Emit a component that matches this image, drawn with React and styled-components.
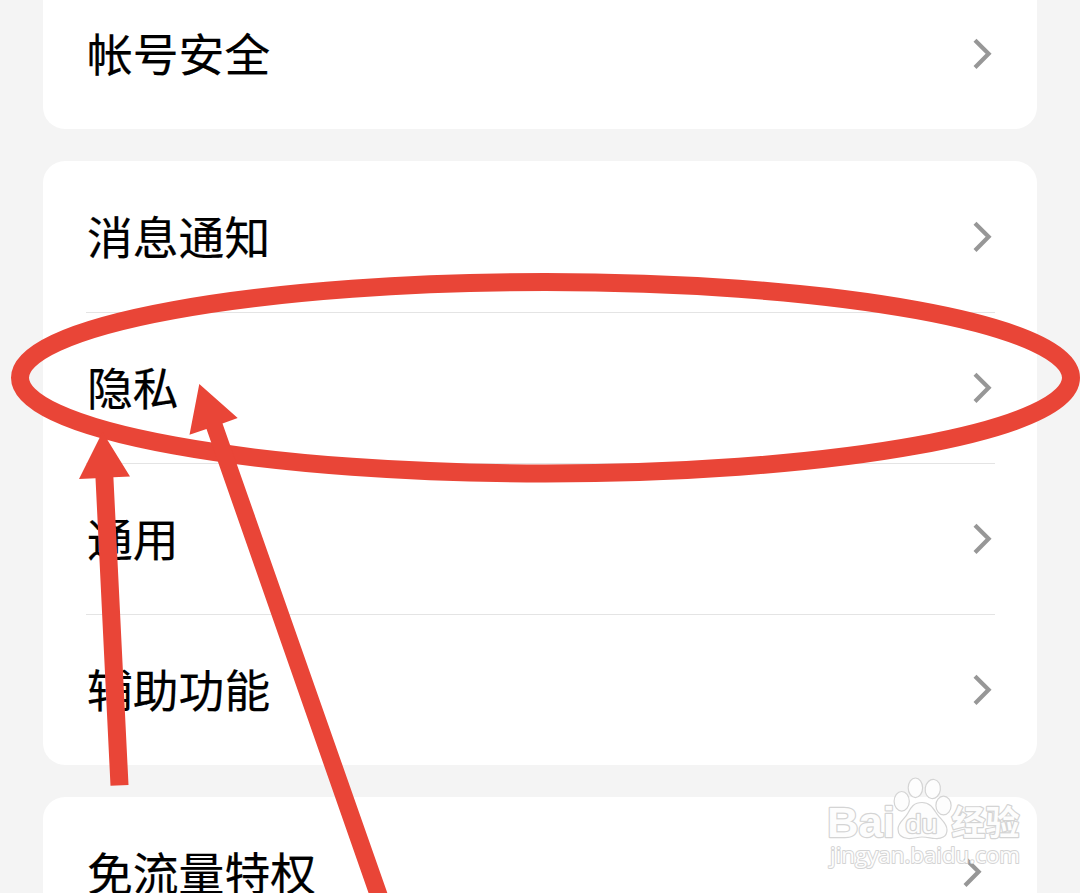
import React from 'react';
import styled, { createGlobalStyle } from 'styled-components'

const GlobalStyle = createGlobalStyle`
  body {
    margin: 0;
    background: #f4f4f4;
    overflow: hidden;
  }
`;

const Page = styled.main`
  box-sizing: border-box;
  position: relative;
  display: flex;
  flex-direction: column;
  gap: 32px;
  width: 1080px;
  height: 893px;
  padding: 0 43px;
  overflow: hidden;
  background: #f4f4f4;
  font-family: "Noto Sans CJK SC", sans-serif;
  color: #000;
`;

const Card = styled.ul`
  flex: none;
  margin: 0;
  padding: 0 42px 0 43px;
  list-style: none;
  background: #fff;
  border-radius: ${props => props.$top ? '0 0 22px 22px' : '22px'};
  margin-top: ${props => props.$top ? '-22px' : '0'};
`;

const Row = styled.li`
  box-sizing: border-box;
  display: flex;
  align-items: center;
  justify-content: space-between;
  height: 151px;
  padding: 0 3px 0 1px;
  & + & {
    border-top: 1px solid #e4e4e4;
    padding-bottom: 1px;
  }
`;

const Label = styled.span`
  font-size: 45.8px;
  line-height: 66px;
  padding-bottom: 3px;
  -webkit-text-stroke: 0.2px #000;
`;

const Arrow = styled.svg`
  width: 20px;
  height: 34px;
  margin-right: ${props => props.$shift || 0}px;
  margin-bottom: ${props => props.$shift ? 2 : 0}px;
`;

const Overlay = styled.svg`
  position: absolute;
  top: 0;
  left: 0;
  width: 1080px;
  height: 893px;
  pointer-events: none;
`;

const Outlined = styled.text`
  paint-order: stroke;
  stroke-width: ${props => props.$outline || 2.4}px;
  stroke-linejoin: round;
  font-family: ${props => props.$font}, sans-serif;
  font-weight: ${props => props.$weight || 700};
`;

const groups = [
  { top: true, items: ['帐号安全'] },
  { items: ['消息通知', '隐私', '通用', '辅助功能'] },
  { shift: 10, items: ['免流量特权'] },
];

function Chevron({ shift }) {
  return (
    <Arrow $shift={shift} viewBox="0 0 20 34">
      <path d="M3 3.2 L16.6 16.8 L3 30.4" fill="none" stroke="#979797" strokeWidth="4.2" />
    </Arrow>
  )
}

function Watermark() {
  return (
    <g fill="#fdfdfd" stroke="#d4d4d4" strokeWidth="1.2">
      <Outlined x="827" y="837" fontSize="43" textLength="68" lengthAdjust="spacingAndGlyphs" $font="Liberation Sans">Bai</Outlined>
      <ellipse cx="901.7" cy="801.3" rx="7.6" ry="9.8" />
      <ellipse cx="915.4" cy="787.8" rx="7.2" ry="9.8" />
      <ellipse cx="932.8" cy="789" rx="7.6" ry="9.6" transform="rotate(8 932.8 789)" />
      <ellipse cx="943.5" cy="805.5" rx="7.6" ry="9.4" />
      <path d="M922 802.5 C930 802.5 933 808 937 814 C941 820 947 823 947 830 C947 837 941 839 935 838.5 C930 838 927 837 922 837 C917 837 914 839 908 838.5 C902 838 898 835 898 829 C898 822 905 819 908 813 C911 807 914 802.5 922 802.5 Z" />
      <Outlined x="905.5" y="832.5" fontSize="26" textLength="32" lengthAdjust="spacingAndGlyphs" $weight="400" $font="Liberation Sans">du</Outlined>
      <Outlined x="951.5" y="835" fontSize="34" $font="Noto Sans CJK SC">经验</Outlined>
      <Outlined x="830" y="863" fontSize="22.5" textLength="190" lengthAdjust="spacingAndGlyphs" $outline={2} $weight="400" $font="Open Sans">jingyan.baidu.com</Outlined>
    </g>
  )
}

function Marks() {
  return (
    <g fill="#e94537">
      <ellipse cx="545.5" cy="377.8" rx="525.5" ry="95.7" fill="none" stroke="#e94537" strokeWidth="18" />
      <path d="M102.5 432 L130 476.5 L113.4 477.2 L128.5 785 L110.5 785.8 L95.5 478.2 L79 479 Z" />
      <path d="M199.3 384 L237.7 418 L222.5 423.4 L389.8 900 L371 900 L206.5 429 L189.5 434.8 Z" />
    </g>
  )
}

function App() {
  return (
    <Page>
      <GlobalStyle />
      {groups.map(group => (
        <Card key={group.items[0]} $top={group.top}>
          {group.items.map(item => (
            <Row key={item}>
              <Label>{item}</Label>
              <Chevron shift={group.shift} />
            </Row>
          ))}
        </Card>
      ))}
      <Overlay viewBox="0 0 1080 893">
        <Watermark />
        <Marks />
      </Overlay>
    </Page>
  )
}

export default App;
